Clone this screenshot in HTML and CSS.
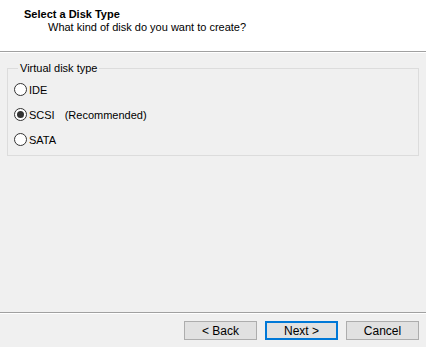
FILE: index.html
```html
<!DOCTYPE html>
<html>
<head>
<meta charset="utf-8">
<link rel="stylesheet" href="styles.css">
</head>
<body>
<div id="wizard">
    <div class="header">
        <div class="title">Select a Disk Type</div>
        <div class="subtitle">What kind of disk do you want to create?</div>
    </div>
    <div class="content">
        <fieldset class="group">
            <legend>Virtual disk type</legend>
            <label class="radio"><span class="dot"></span>IDE</label>
            <label class="radio checked"><span class="dot"></span>SCSI<span class="note">(Recommended)</span></label>
            <label class="radio"><span class="dot"></span>SATA</label>
        </fieldset>
    </div>
    <div class="footer">
        <button class="btn">&lt; Back</button>
        <button class="btn default">Next &gt;</button>
        <button class="btn cancel">Cancel</button>
    </div>
</div>
</body>
</html>
```

FILE: styles.css
```css
*{padding:0;margin:0;box-sizing:border-box;}
html,body{height:100%;}
body{
    background:#f0f0f0;
    font-family:"Liberation Sans",Arial,sans-serif;
    font-size:11px;
    color:#000;
}
#wizard{
    display:flex;
    flex-direction:column;
    width:426px;
    height:347px;
}
.header{
    height:52px;
    background:#fff;
    border-bottom:1px solid #a0a0a0;
    box-shadow:0 1px 0 #fff;
    padding:8px 0 0 24px;
}
.title{
    font-weight:bold;
    line-height:13px;
}
.subtitle{
    padding-left:24px;
    line-height:13px;
}
.content{
    flex:1;
    padding:9px 7px 0 7px;
}
.group{
    border:1px solid #dcdcdc;
    border-radius:0;
    padding:2px 0 0 6px;
    height:95px;
}
.group legend{
    margin-left:4px;
    padding:0 2px;
    line-height:14px;
}
.radio{
    display:flex;
    align-items:center;
    height:25px;
    line-height:14px;
}
.dot{
    width:13px;
    height:13px;
    border:1px solid #333;
    border-radius:50%;
    background:#fff;
    margin-right:2px;
    display:flex;
    align-items:center;
    justify-content:center;
}
.checked .dot::after{
    content:"";
    width:7px;
    height:7px;
    border-radius:50%;
    background:#333;
}
.note{
    margin-left:10px;
}
.footer{
    height:35px;
    border-top:1px solid #a0a0a0;
    box-shadow:inset 0 1px 0 #fff;
    display:flex;
    justify-content:flex-end;
    align-items:flex-start;
    gap:8px;
    padding:8px 7px 0 0;
}
.btn{
    width:73px;
    height:19px;
    font:inherit;
    font-size:12px;
    background:#e1e1e1;
    border:1px solid #adadad;
}
.btn.default{
    border:2px solid #0078d7;
}
```
